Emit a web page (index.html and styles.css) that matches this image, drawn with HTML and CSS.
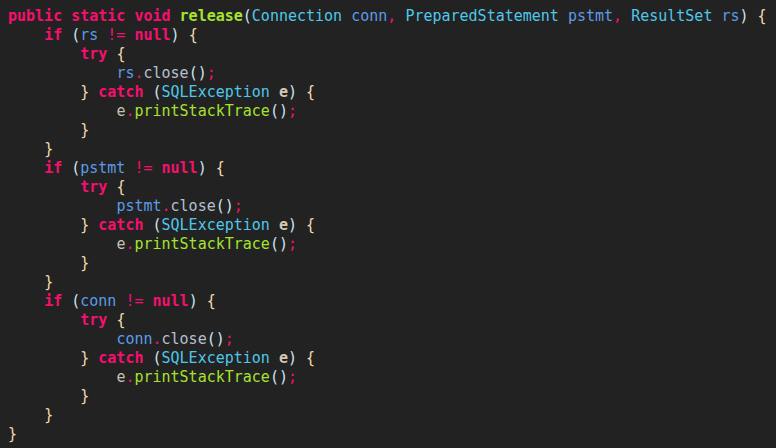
FILE: index.html
```html
<!DOCTYPE html>
<html>
<head>
<meta charset="utf-8">
<link rel="stylesheet" href="styles.css">
</head>
<body>
<pre class="code"><span class="k">public</span> <span class="k">static</span> <span class="k">void</span> <span class="fn">release</span><span class="p">(</span><span class="t">Connection</span> <span class="v">conn</span><span class="o">,</span> <span class="t">PreparedStatement</span> <span class="v">pstmt</span><span class="o">,</span> <span class="t">ResultSet</span> <span class="v">rs</span><span class="p">)</span> <span class="b">{</span>
    <span class="k">if</span> <span class="p">(</span><span class="v">rs</span> <span class="o">!=</span> <span class="k">null</span><span class="p">)</span> <span class="b">{</span>
        <span class="k">try</span> <span class="b">{</span>
            <span class="v">rs</span><span class="o">.</span><span class="m">close</span><span class="p">()</span><span class="o">;</span>
        <span class="b">}</span> <span class="k">catch</span> <span class="p">(</span><span class="t">SQLException</span> <span class="e">e</span><span class="p">)</span> <span class="b">{</span>
            <span class="ev">e</span><span class="o">.</span><span class="g">printStackTrace</span><span class="p">()</span><span class="o">;</span>
        <span class="b">}</span>
    <span class="b">}</span>
    <span class="k">if</span> <span class="p">(</span><span class="v">pstmt</span> <span class="o">!=</span> <span class="k">null</span><span class="p">)</span> <span class="b">{</span>
        <span class="k">try</span> <span class="b">{</span>
            <span class="v">pstmt</span><span class="o">.</span><span class="m">close</span><span class="p">()</span><span class="o">;</span>
        <span class="b">}</span> <span class="k">catch</span> <span class="p">(</span><span class="t">SQLException</span> <span class="e">e</span><span class="p">)</span> <span class="b">{</span>
            <span class="ev">e</span><span class="o">.</span><span class="g">printStackTrace</span><span class="p">()</span><span class="o">;</span>
        <span class="b">}</span>
    <span class="b">}</span>
    <span class="k">if</span> <span class="p">(</span><span class="v">conn</span> <span class="o">!=</span> <span class="k">null</span><span class="p">)</span> <span class="b">{</span>
        <span class="k">try</span> <span class="b">{</span>
            <span class="v">conn</span><span class="o">.</span><span class="m">close</span><span class="p">()</span><span class="o">;</span>
        <span class="b">}</span> <span class="k">catch</span> <span class="p">(</span><span class="t">SQLException</span> <span class="e">e</span><span class="p">)</span> <span class="b">{</span>
            <span class="ev">e</span><span class="o">.</span><span class="g">printStackTrace</span><span class="p">()</span><span class="o">;</span>
        <span class="b">}</span>
    <span class="b">}</span>
<span class="b">}</span></pre>
</body>
</html>
```
FILE: styles.css
```css
html, body {
  margin: 0;
  padding: 0;
  background: #222222;
  height: 100%;
}
.code {
  margin: 0;
  padding: 7px 8px;
  font-family: "DejaVu Sans Mono", "Liberation Mono", monospace;
  font-size: 15px;
  line-height: 19px;
  color: #d8dde6;
  background: #222222;
}
.k { color: #f5106e; font-weight: bold; }
.fn { color: #a6e22e; font-weight: bold; }
.g { color: #a6e22e; }
.t { color: #4fc8ea; }
.v { color: #5c9be6; }
.o { color: #f5106e; }
.p { color: #cfe3f2; }
.b { color: #f2dcae; }
.m { color: #b4c0d0; }
.e { color: #d4c8b4; font-weight: bold; }
.ev { color: #c8c0b0; }
```
